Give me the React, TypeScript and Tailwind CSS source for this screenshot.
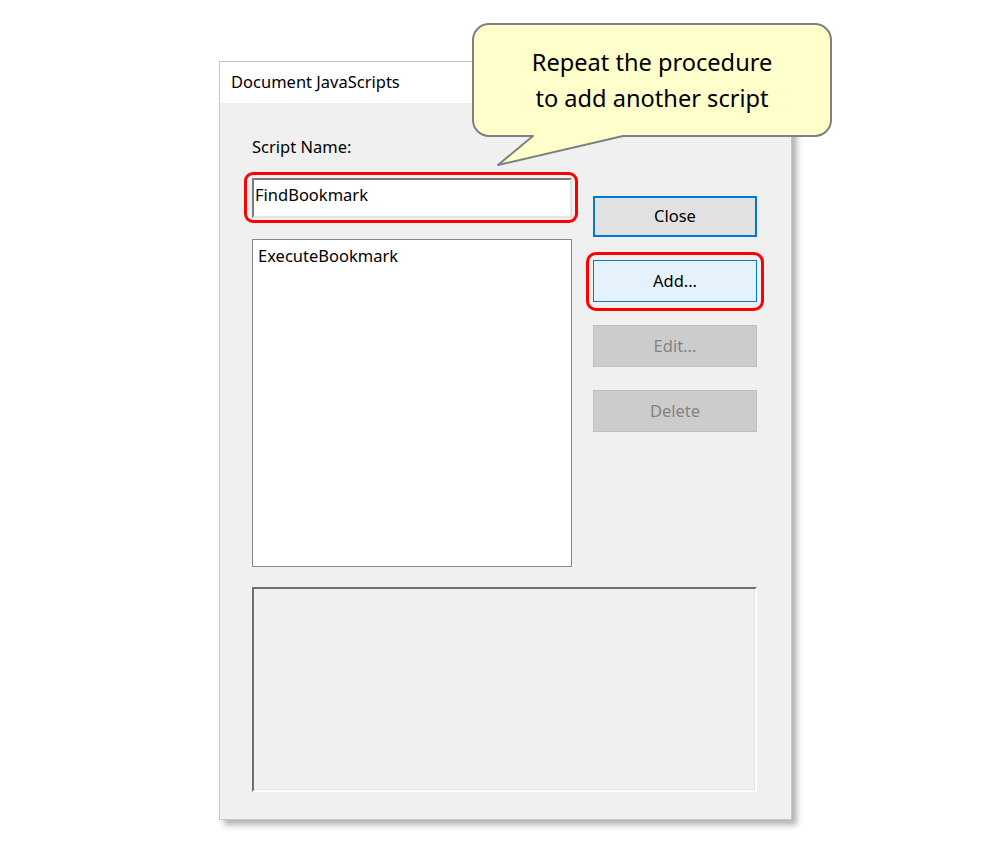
import React from "react";

const uiFont = { fontFamily: '"Noto Sans", "Open Sans", sans-serif' };

const Callout = () => (
  <div className="absolute left-[470px] top-[20px] w-[366px] h-[150px]">
    <svg width="366" height="150" viewBox="0 0 366 150" className="absolute inset-0">
      <path
        d="M 19 4 H 345 A 16 16 0 0 1 361 20 V 100 A 16 16 0 0 1 345 116 H 153 L 28 145 L 63 116 H 19 A 16 16 0 0 1 3 100 V 20 A 16 16 0 0 1 19 4 Z"
        fill="#ffffcc"
        stroke="#7f7f7f"
        strokeWidth="2"
        strokeLinejoin="round"
      />
    </svg>
    <div className="absolute left-[3px] top-[4px] w-[358px] h-[112px] flex flex-col items-center justify-center text-[23.6px] leading-[36px] text-black">
      <span>Repeat the procedure</span>
      <span>to add another script</span>
    </div>
  </div>
);

const Button = ({ label, variant }: { label: string; variant: "default" | "hot" | "disabled" }) => {
  if (variant === "default")
    return (
      <div className="h-[41px] border-2 border-[#0078d7] bg-[#e1e1e1] flex items-center justify-center text-[16.5px] text-black">
        {label}
      </div>
    );
  if (variant === "hot")
    return (
      <div className="relative">
        <div className="h-[42px] border border-[#0078d7] bg-[#e5f1fb] flex items-center justify-center text-[16.5px] text-black">
          {label}
        </div>
        <div className="absolute -left-[7px] -right-[7px] -top-[8px] -bottom-[9px] border-[3px] border-[#ff0000] rounded-[10px]" />
      </div>
    );
  return (
    <div className="h-[42px] border border-[#bfbfbf] bg-[#cccccc] flex items-center justify-center text-[16.5px] text-[#838383]">
      {label}
    </div>
  );
};

export default function App() {
  return (
    <div className="relative w-[1000px] h-[868px] bg-white overflow-hidden" style={uiFont}>
      <div className="absolute left-0 top-0 pl-[219px] pt-[61px]">
        <div className="w-[573px] h-[759px] border border-[#c6c6c6] bg-[#f0f0f0] shadow-[5px_5px_6px_rgba(0,0,0,0.3)] flex flex-col">
          {/* title bar */}
          <div className="h-[41px] bg-white pl-[11px] flex items-center text-[16.5px] text-black">
            Document JavaScripts
          </div>

          {/* body */}
          <div className="pl-[32px] pr-[34px] pt-[33px] flex flex-col">
            <div className="flex gap-[21px]">
              <div className="w-[320px] flex flex-col">
                <div className="h-[22px] leading-[22px] text-[16.5px] text-black">Script Name:</div>
                <div className="relative mt-[20px]">
                  <div className="h-[40px] bg-white border-2 border-t-[#7a7a7a] border-l-[#7a7a7a] border-r-[#e3e3e3] border-b-[#e3e3e3] pl-[1px] pt-[4px] text-[16.5px] leading-[22px] text-black">
                    FindBookmark
                  </div>
                  <div className="absolute -left-[8px] -right-[6px] -top-[6px] -bottom-[5px] border-[3px] border-[#ff0000] rounded-[9px]" />
                </div>
                <div className="mt-[21px] h-[328px] bg-white border border-[#828790] pl-[5px] pt-[5px] text-[16.5px] leading-[22px] text-black">
                  ExecuteBookmark
                </div>
              </div>
              <div className="w-[164px] pt-[60px] flex flex-col gap-[23px]">
                <Button label="Close" variant="default" />
                <Button label="Add..." variant="hot" />
                <Button label="Edit..." variant="disabled" />
                <Button label="Delete" variant="disabled" />
              </div>
            </div>
            <div className="mt-[20px] h-[205px] bg-[#f0f0f0] border-2 border-t-[#6e6e6e] border-l-[#6e6e6e] border-r-[#fdfdfd] border-b-[#fdfdfd] shadow-[inset_-1px_-1px_0_#e3e3e3]" />
          </div>
        </div>
      </div>
      <Callout />
    </div>
  );
}
